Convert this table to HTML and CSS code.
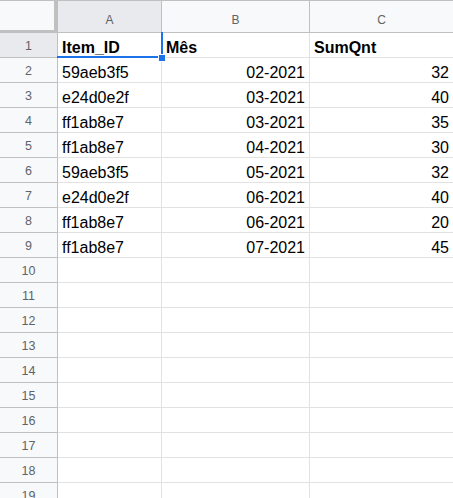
FILE: index.html
```html
<!DOCTYPE html>
<html>
<head>
<meta charset="utf-8">
<link rel="stylesheet" href="styles.css">
</head>
<body>
<div class="sheet">
  <div class="corner"></div>
  <div class="colhead sel">A</div>
  <div class="colhead">B</div>
  <div class="colhead last">C</div>

  <div class="rowhead sel">1</div>
  <div class="cell bold active">Item_ID<span class="sel-right"></span><span class="sel-bottom"></span><span class="handle"></span></div>
  <div class="cell bold">Mês</div>
  <div class="cell bold last">SumQnt</div>

  <div class="rowhead">2</div><div class="cell">59aeb3f5</div><div class="cell num">02-2021</div><div class="cell num last">32</div>
  <div class="rowhead">3</div><div class="cell">e24d0e2f</div><div class="cell num">03-2021</div><div class="cell num last">40</div>
  <div class="rowhead">4</div><div class="cell">ff1ab8e7</div><div class="cell num">03-2021</div><div class="cell num last">35</div>
  <div class="rowhead">5</div><div class="cell">ff1ab8e7</div><div class="cell num">04-2021</div><div class="cell num last">30</div>
  <div class="rowhead">6</div><div class="cell">59aeb3f5</div><div class="cell num">05-2021</div><div class="cell num last">32</div>
  <div class="rowhead">7</div><div class="cell">e24d0e2f</div><div class="cell num">06-2021</div><div class="cell num last">40</div>
  <div class="rowhead">8</div><div class="cell">ff1ab8e7</div><div class="cell num">06-2021</div><div class="cell num last">20</div>
  <div class="rowhead">9</div><div class="cell">ff1ab8e7</div><div class="cell num">07-2021</div><div class="cell num last">45</div>
  <div class="rowhead">10</div><div class="cell"></div><div class="cell"></div><div class="cell last"></div>
  <div class="rowhead">11</div><div class="cell"></div><div class="cell"></div><div class="cell last"></div>
  <div class="rowhead">12</div><div class="cell"></div><div class="cell"></div><div class="cell last"></div>
  <div class="rowhead">13</div><div class="cell"></div><div class="cell"></div><div class="cell last"></div>
  <div class="rowhead">14</div><div class="cell"></div><div class="cell"></div><div class="cell last"></div>
  <div class="rowhead">15</div><div class="cell"></div><div class="cell"></div><div class="cell last"></div>
  <div class="rowhead">16</div><div class="cell"></div><div class="cell"></div><div class="cell last"></div>
  <div class="rowhead">17</div><div class="cell"></div><div class="cell"></div><div class="cell last"></div>
  <div class="rowhead">18</div><div class="cell"></div><div class="cell"></div><div class="cell last"></div>
  <div class="rowhead">19</div><div class="cell"></div><div class="cell"></div><div class="cell last"></div>
</div>
</body>
</html>
```

FILE: styles.css
```css
html, body {
  margin: 0;
  padding: 0;
  background: #ffffff;
  overflow: hidden;
}

.sheet {
  display: grid;
  grid-template-columns: 58px 104px 148px 144px;
  grid-auto-rows: 25px;
  grid-template-rows: 32px;
  border-top: 1px solid #c0c0c0;
  width: 454px;
  font-family: "Liberation Sans", Arial, sans-serif;
}

.corner {
  background: #f8f9fa;
  border-right: 4px solid #c0c0c0;
  border-bottom: 3px solid #c0c0c0;
  box-sizing: border-box;
}

.colhead {
  box-sizing: border-box;
  background: #f8f9fa;
  border-right: 1px solid #c0c0c0;
  border-bottom: 1px solid #c0c0c0;
  color: #5f6368;
  font-size: 12px;
  display: flex;
  align-items: center;
  justify-content: center;
  padding-top: 6px;
}

.colhead.sel {
  background: #e8eaed;
}

.rowhead {
  box-sizing: border-box;
  background: #f8f9fa;
  border-right: 1px solid #c0c0c0;
  border-bottom: 1px solid #c0c0c0;
  color: #5f6368;
  font-size: 12.5px;
  display: flex;
  align-items: center;
  justify-content: center;
  padding-top: 2px;
}

.rowhead.sel {
  background: #e8eaed;
}

.cell {
  box-sizing: border-box;
  border-right: 1px solid #e2e2e2;
  border-bottom: 1px solid #e2e2e2;
  font-size: 16px;
  line-height: 18px;
  padding: 6px 4px 0 4px;
  color: #000000;
  white-space: nowrap;
  overflow: hidden;
}

.cell.bold {
  font-weight: bold;
}

.cell.num {
  text-align: right;
}

.cell.active {
  position: relative;
  overflow: visible;
}

.sel-right {
  position: absolute;
  right: -2px;
  top: -1px;
  width: 2px;
  height: 25px;
  background: #1a73e8;
}

.sel-bottom {
  position: absolute;
  left: -1px;
  bottom: -1px;
  width: 104px;
  height: 2px;
  background: #1a73e8;
}

.handle {
  position: absolute;
  right: -5px;
  bottom: -5px;
  width: 6px;
  height: 6px;
  background: #1a73e8;
  border: 1px solid #ffffff;
  z-index: 2;
}
```
